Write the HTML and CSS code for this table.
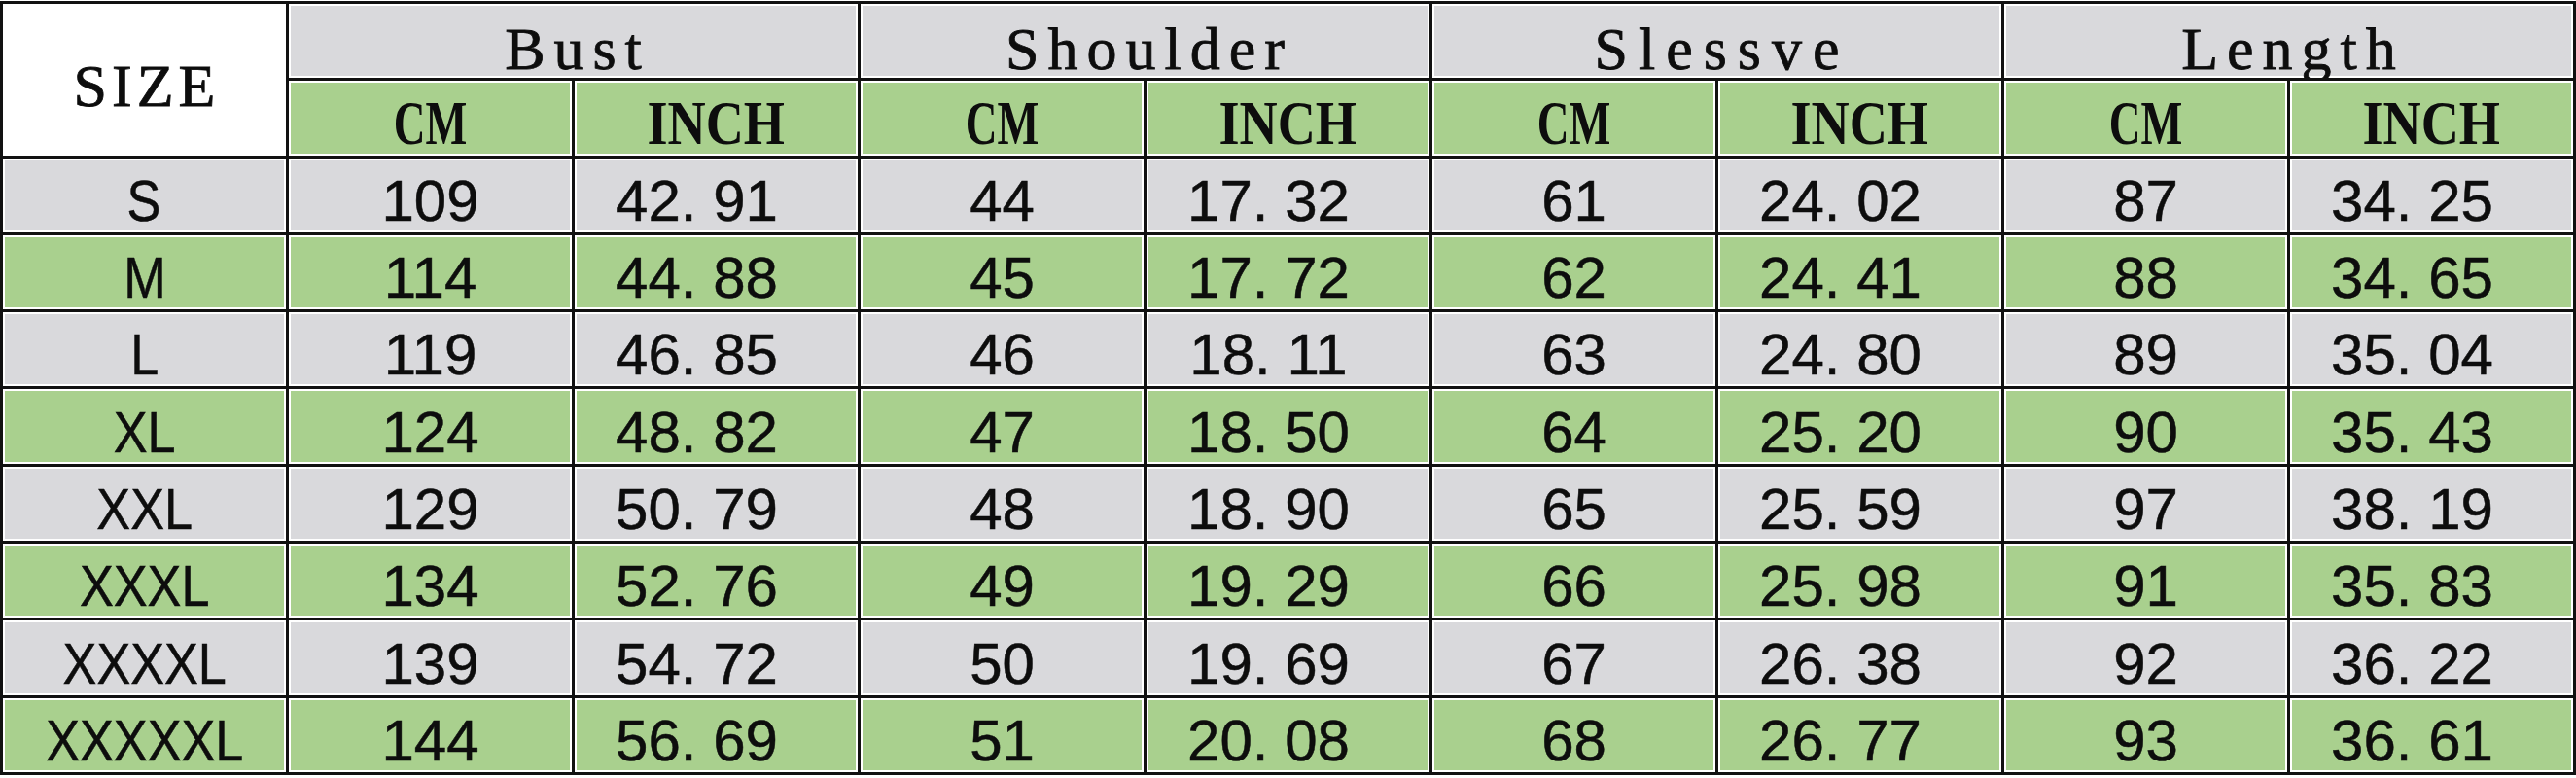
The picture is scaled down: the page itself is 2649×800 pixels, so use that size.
FILE: index.html
```html
<!DOCTYPE html>
<html lang="en">
<head>
<meta charset="utf-8">
<title>Size Chart</title>
<link rel="stylesheet" href="styles.css">
</head>
<body>
<div class="chart">
  <div class="cell head-size">SIZE</div>
  <div class="cell group">Bust</div>
  <div class="cell group">Shoulder</div>
  <div class="cell group wide">Slessve</div>
  <div class="cell group">Length</div>

  <div class="cell unit"><span class="cm">CM</span></div>
  <div class="cell unit"><span class="inch">INCH</span></div>
  <div class="cell unit"><span class="cm">CM</span></div>
  <div class="cell unit"><span class="inch">INCH</span></div>
  <div class="cell unit"><span class="cm">CM</span></div>
  <div class="cell unit"><span class="inch">INCH</span></div>
  <div class="cell unit"><span class="cm">CM</span></div>
  <div class="cell unit"><span class="inch">INCH</span></div>

  <div class="row gray">
    <div class="cell label"><span>S</span></div>
    <div class="cell num">109</div><div class="cell num in">42. 91</div>
    <div class="cell num">44</div><div class="cell num in">17. 32</div>
    <div class="cell num">61</div><div class="cell num in">24. 02</div>
    <div class="cell num">87</div><div class="cell num in">34. 25</div>
  </div>
  <div class="row green">
    <div class="cell label"><span>M</span></div>
    <div class="cell num">114</div><div class="cell num in">44. 88</div>
    <div class="cell num">45</div><div class="cell num in">17. 72</div>
    <div class="cell num">62</div><div class="cell num in">24. 41</div>
    <div class="cell num">88</div><div class="cell num in">34. 65</div>
  </div>
  <div class="row gray">
    <div class="cell label"><span>L</span></div>
    <div class="cell num">119</div><div class="cell num in">46. 85</div>
    <div class="cell num">46</div><div class="cell num in">18. 11</div>
    <div class="cell num">63</div><div class="cell num in">24. 80</div>
    <div class="cell num">89</div><div class="cell num in">35. 04</div>
  </div>
  <div class="row green">
    <div class="cell label"><span>XL</span></div>
    <div class="cell num">124</div><div class="cell num in">48. 82</div>
    <div class="cell num">47</div><div class="cell num in">18. 50</div>
    <div class="cell num">64</div><div class="cell num in">25. 20</div>
    <div class="cell num">90</div><div class="cell num in">35. 43</div>
  </div>
  <div class="row gray">
    <div class="cell label"><span>XXL</span></div>
    <div class="cell num">129</div><div class="cell num in">50. 79</div>
    <div class="cell num">48</div><div class="cell num in">18. 90</div>
    <div class="cell num">65</div><div class="cell num in">25. 59</div>
    <div class="cell num">97</div><div class="cell num in">38. 19</div>
  </div>
  <div class="row green">
    <div class="cell label"><span>XXXL</span></div>
    <div class="cell num">134</div><div class="cell num in">52. 76</div>
    <div class="cell num">49</div><div class="cell num in">19. 29</div>
    <div class="cell num">66</div><div class="cell num in">25. 98</div>
    <div class="cell num">91</div><div class="cell num in">35. 83</div>
  </div>
  <div class="row gray">
    <div class="cell label"><span>XXXXL</span></div>
    <div class="cell num">139</div><div class="cell num in">54. 72</div>
    <div class="cell num">50</div><div class="cell num in">19. 69</div>
    <div class="cell num">67</div><div class="cell num in">26. 38</div>
    <div class="cell num">92</div><div class="cell num in">36. 22</div>
  </div>
  <div class="row green">
    <div class="cell label"><span>XXXXXL</span></div>
    <div class="cell num">144</div><div class="cell num in">56. 69</div>
    <div class="cell num">51</div><div class="cell num in">20. 08</div>
    <div class="cell num">68</div><div class="cell num in">26. 77</div>
    <div class="cell num">93</div><div class="cell num in">36. 61</div>
  </div>
</div>
</body>
</html>
```

FILE: styles.css
```css
html, body {
  margin: 0;
  padding: 0;
  background: #ffffff;
}

.chart {
  display: grid;
  grid-template-columns: repeat(9, 294px);
  grid-template-rows: repeat(10, 79.3px);
  width: max-content;
  margin-top: 1px;
  border-top: 3px solid #111111;
  border-left: 3px solid #111111;
  color: #0d0d0d;
}

.row {
  display: contents;
}

.cell {
  box-sizing: border-box;
  display: flex;
  align-items: center;
  justify-content: center;
  border-right: 3px solid #111111;
  border-bottom: 3px solid #111111;
  box-shadow: inset 0 0 0 2px #ffffff;
  white-space: nowrap;
  overflow: hidden;
}

.gray .cell,
.group {
  background: #d9d9dc;
}

.green .cell,
.unit {
  background: #a9d08e;
}

.head-size {
  grid-row: span 2;
  background: #ffffff;
  font: 62px/1 "Liberation Serif", "Times New Roman", serif;
  letter-spacing: 5px;
  padding-left: 5px;
  padding-top: 12px;
  -webkit-text-stroke: 0.8px #0d0d0d;
}

.group {
  grid-column: span 2;
  font: 62px/1 "Liberation Serif", "Times New Roman", serif;
  letter-spacing: 9px;
  padding-left: 9px;
  padding-top: 16px;
  -webkit-text-stroke: 0.8px #0d0d0d;
}

.group.wide {
  letter-spacing: 11px;
  padding-left: 11px;
}

.unit {
  font: bold 63px/1 "Liberation Serif", "Times New Roman", serif;
  padding-top: 12px;
}

.unit span {
  display: inline-block;
}

.unit .cm {
  transform: scaleX(0.72);
}

.unit .inch {
  transform: scaleX(0.86);
}

.num,
.label {
  font: 60px/1 "Liberation Sans", Arial, sans-serif;
  padding-top: 12px;
  -webkit-text-stroke: 0.5px #0d0d0d;
}

.num.in {
  padding-right: 40px;
}

.label span {
  display: inline-block;
  transform: scaleX(0.87);
}
```
